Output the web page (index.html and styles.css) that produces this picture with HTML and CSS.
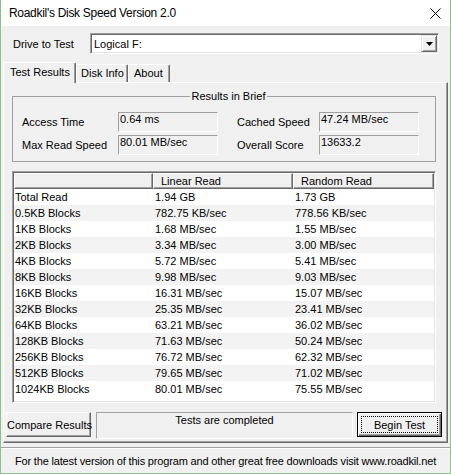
FILE: index.html
```html
<!DOCTYPE html>
<html lang="en">
<head>
    <meta charset="UTF-8">
    <title>Roadkil's Disk Speed Version 2.0</title>
    <link rel="stylesheet" href="styles.css">
</head>
<body>
    <div class="window">
        <div class="titlebar">
            <span class="title">Roadkil's Disk Speed Version 2.0</span>
            <svg class="close" width="11" height="11" viewBox="0 0 11 11">
                <path d="M0.5 0.5 L10.5 10.5 M10.5 0.5 L0.5 10.5" stroke="#000" stroke-width="1"/>
            </svg>
        </div>

        <div class="client">
            <div class="drive-row">
                <span class="drive-label">Drive to Test</span>
                <div class="combo">
                    <span class="combo-text">Logical F:</span>
                    <span class="combo-btn">
                        <svg width="7" height="4" viewBox="0 0 7 4"><path d="M0 0 H7 L3.5 4 Z" fill="#000"/></svg>
                    </span>
                </div>
            </div>

            <div class="tabs">
                <div class="tab active">Test Results</div>
                <div class="tab tab-disk">Disk Info</div>
                <div class="tab tab-about">About</div>
            </div>

            <div class="panel">
                <fieldset class="brief">
                    <legend>Results in Brief</legend>
                    <div class="brief-grid">
                        <span>Access Time</span>
                        <div class="value">0.64 ms</div>
                        <span>Cached Speed</span>
                        <div class="value">47.24 MB/sec</div>
                        <span>Max Read Speed</span>
                        <div class="value">80.01 MB/sec</div>
                        <span>Overall Score</span>
                        <div class="value">13633.2</div>
                    </div>
                </fieldset>

                <div class="list">
                    <div class="list-head">
                        <div class="head-cell"></div>
                        <div class="head-cell">Linear Read</div>
                        <div class="head-cell">Random Read</div>
                    </div>
                    <div class="list-body">
                        <div class="row"><span>Total Read</span><span>1.94 GB</span><span>1.73 GB</span></div>
                        <div class="row"><span>0.5KB Blocks</span><span>782.75 KB/sec</span><span>778.56 KB/sec</span></div>
                        <div class="row"><span>1KB Blocks</span><span>1.68 MB/sec</span><span>1.55 MB/sec</span></div>
                        <div class="row"><span>2KB Blocks</span><span>3.34 MB/sec</span><span>3.00 MB/sec</span></div>
                        <div class="row"><span>4KB Blocks</span><span>5.72 MB/sec</span><span>5.41 MB/sec</span></div>
                        <div class="row"><span>8KB Blocks</span><span>9.98 MB/sec</span><span>9.03 MB/sec</span></div>
                        <div class="row"><span>16KB Blocks</span><span>16.31 MB/sec</span><span>15.07 MB/sec</span></div>
                        <div class="row"><span>32KB Blocks</span><span>25.35 MB/sec</span><span>23.41 MB/sec</span></div>
                        <div class="row"><span>64KB Blocks</span><span>63.21 MB/sec</span><span>36.02 MB/sec</span></div>
                        <div class="row"><span>128KB Blocks</span><span>71.63 MB/sec</span><span>50.24 MB/sec</span></div>
                        <div class="row"><span>256KB Blocks</span><span>76.72 MB/sec</span><span>62.32 MB/sec</span></div>
                        <div class="row"><span>512KB Blocks</span><span>79.65 MB/sec</span><span>71.02 MB/sec</span></div>
                        <div class="row"><span>1024KB Blocks</span><span>80.01 MB/sec</span><span>75.55 MB/sec</span></div>
                    </div>
                </div>

                <div class="actions">
                    <button class="btn">Compare Results</button>
                    <div class="status">Tests are completed</div>
                    <button class="btn btn-default"><span class="focus">Begin Test</span></button>
                </div>
            </div>

            <div class="footer">For the latest version of this program and other great free downloads visit www.roadkil.net</div>
        </div>
    </div>
</body>
</html>
```

FILE: styles.css
```css
* {
    margin: 0;
    padding: 0;
    box-sizing: border-box;
}

body {
    font-family: 'Liberation Sans', Arial, sans-serif;
    font-size: 11px;
    color: #000;
    background: #f0f0f0;
}

.window {
    width: 451px;
    height: 474px;
    display: flex;
    flex-direction: column;
    background: #f0f0f0;
    border: 1px solid #8cc08c;
    border-top: none;
}

/* title bar */
.titlebar {
    height: 26px;
    flex: none;
    display: flex;
    align-items: center;
    justify-content: space-between;
    padding: 0 9px 0 8px;
    background: #fff;
}

.title {
    font-size: 12px;
    letter-spacing: -0.3px;
}

.client {
    flex: 1;
    display: flex;
    flex-direction: column;
}

/* drive selector */
.drive-row {
    display: flex;
    align-items: center;
    padding: 7px 0 0 12px;
}

.drive-label {
    width: 77px;
}

.combo {
    width: 349px;
    height: 21px;
    display: flex;
    align-items: center;
    justify-content: space-between;
    padding: 1px 1px 1px 3px;
    background: #fff;
    border: 1px solid;
    border-color: #a0a0a0 #fff #fff #a0a0a0;
    box-shadow: inset 1px 1px #696969, inset -1px -1px #e3e3e3;
}

.combo-btn {
    width: 16px;
    height: 17px;
    display: flex;
    align-items: center;
    justify-content: center;
    background: #f0f0f0;
    border: 1px solid;
    border-color: #e3e3e3 #696969 #696969 #e3e3e3;
    box-shadow: inset 1px 1px #fff, inset -1px -1px #a0a0a0;
}

/* tabs */
.tabs {
    display: flex;
    align-items: flex-start;
    height: 21px;
    margin: 8px 0 -1px;
    padding-left: 2px;
    position: relative;
    z-index: 1;
}

.tab {
    height: 18px;
    margin-top: 2px;
    line-height: 17px;
    background: #f0f0f0;
    border: 1px solid;
    border-color: #fff #696969 transparent #fff;
    border-bottom: none;
    border-radius: 2px 2px 0 0;
    box-shadow: inset -1px 0 #a0a0a0;
}

.tab.active {
    width: 73px;
    height: 21px;
    margin-top: 0;
    line-height: 18px;
    padding-left: 6px;
}

.tab-disk {
    width: 52px;
    padding-left: 4px;
}

.tab-about {
    width: 42px;
    padding-left: 5px;
}

/* tab page */
.panel {
    height: 361px;
    margin: 0 2px;
    border: 1px solid;
    border-color: #fff #696969 #696969 #fff;
    box-shadow: inset -1px -1px #a0a0a0;
}

.brief {
    width: 424px;
    margin: 7px 0 0 8px;
    padding: 9px 0 6px 9px;
    border: 1px solid #a0a0a0;
}

.brief legend {
    margin: 0 auto;
    padding: 0 2px;
    line-height: 13px;
}

.brief-grid {
    display: grid;
    grid-template-columns: 96px 119px 82px 100px;
    row-gap: 3px;
    align-items: center;
}

.value {
    width: 100px;
    height: 20px;
    padding-left: 1px;
    line-height: 13px;
    border: 1px solid;
    border-color: #a0a0a0 #fff #fff #a0a0a0;
}

/* results list */
.list {
    width: 424px;
    height: 232px;
    margin: 9px 0 0 8px;
    padding: 1px;
    background: #fff;
    border: 1px solid;
    border-color: #a0a0a0 #fff #fff #a0a0a0;
    box-shadow: inset 1px 1px #696969, inset -1px -1px #e3e3e3;
}

.list-head,
.row {
    display: grid;
    grid-template-columns: 139px 140px 141px;
}

.head-cell {
    height: 16px;
    padding-left: 7px;
    line-height: 14px;
    background: #f0f0f0;
    border: 1px solid;
    border-color: #fff #696969 #696969 #fff;
    box-shadow: inset -1px -1px #a0a0a0;
}

.row {
    height: 16px;
    line-height: 16px;
}

.row:nth-child(even) {
    background: #f3f3f3;
}

.row span {
    padding-left: 2px;
    white-space: nowrap;
}

.row span:first-child {
    padding-left: 1px;
}

/* buttons + status */
.actions {
    display: flex;
    align-items: flex-start;
    margin: 9px 0 0 2px;
}

.btn {
    width: 85px;
    height: 25px;
    padding: 0;
    font: inherit;
    color: #000;
    white-space: nowrap;
    background: #f0f0f0;
    border: 1px solid;
    border-color: #fff #696969 #696969 #fff;
    box-shadow: inset -1px -1px #a0a0a0;
}

.status {
    width: 257px;
    height: 27px;
    margin: 0 4px 0 5px;
    padding-top: 1px;
    line-height: 13px;
    text-align: center;
    border: 1px solid;
    border-color: #a0a0a0 #fff #fff #a0a0a0;
}

.btn-default {
    padding: 3px;
    border: 1px solid #000;
    box-shadow: inset 1px 1px #fff, inset -1px -1px #696969, inset -2px -2px #a0a0a0;
}

.focus {
    display: flex;
    align-items: center;
    justify-content: center;
    height: 100%;
    border: 1px dotted #000;
}

/* footer */
.footer {
    flex: 1;
    margin-top: 4px;
    padding-top: 7px;
    line-height: 13px;
    text-align: center;
    letter-spacing: -0.17px;
    white-space: nowrap;
    border-top: 1px solid #a0a0a0;
    box-shadow: inset 0 1px #fff;
}
```
